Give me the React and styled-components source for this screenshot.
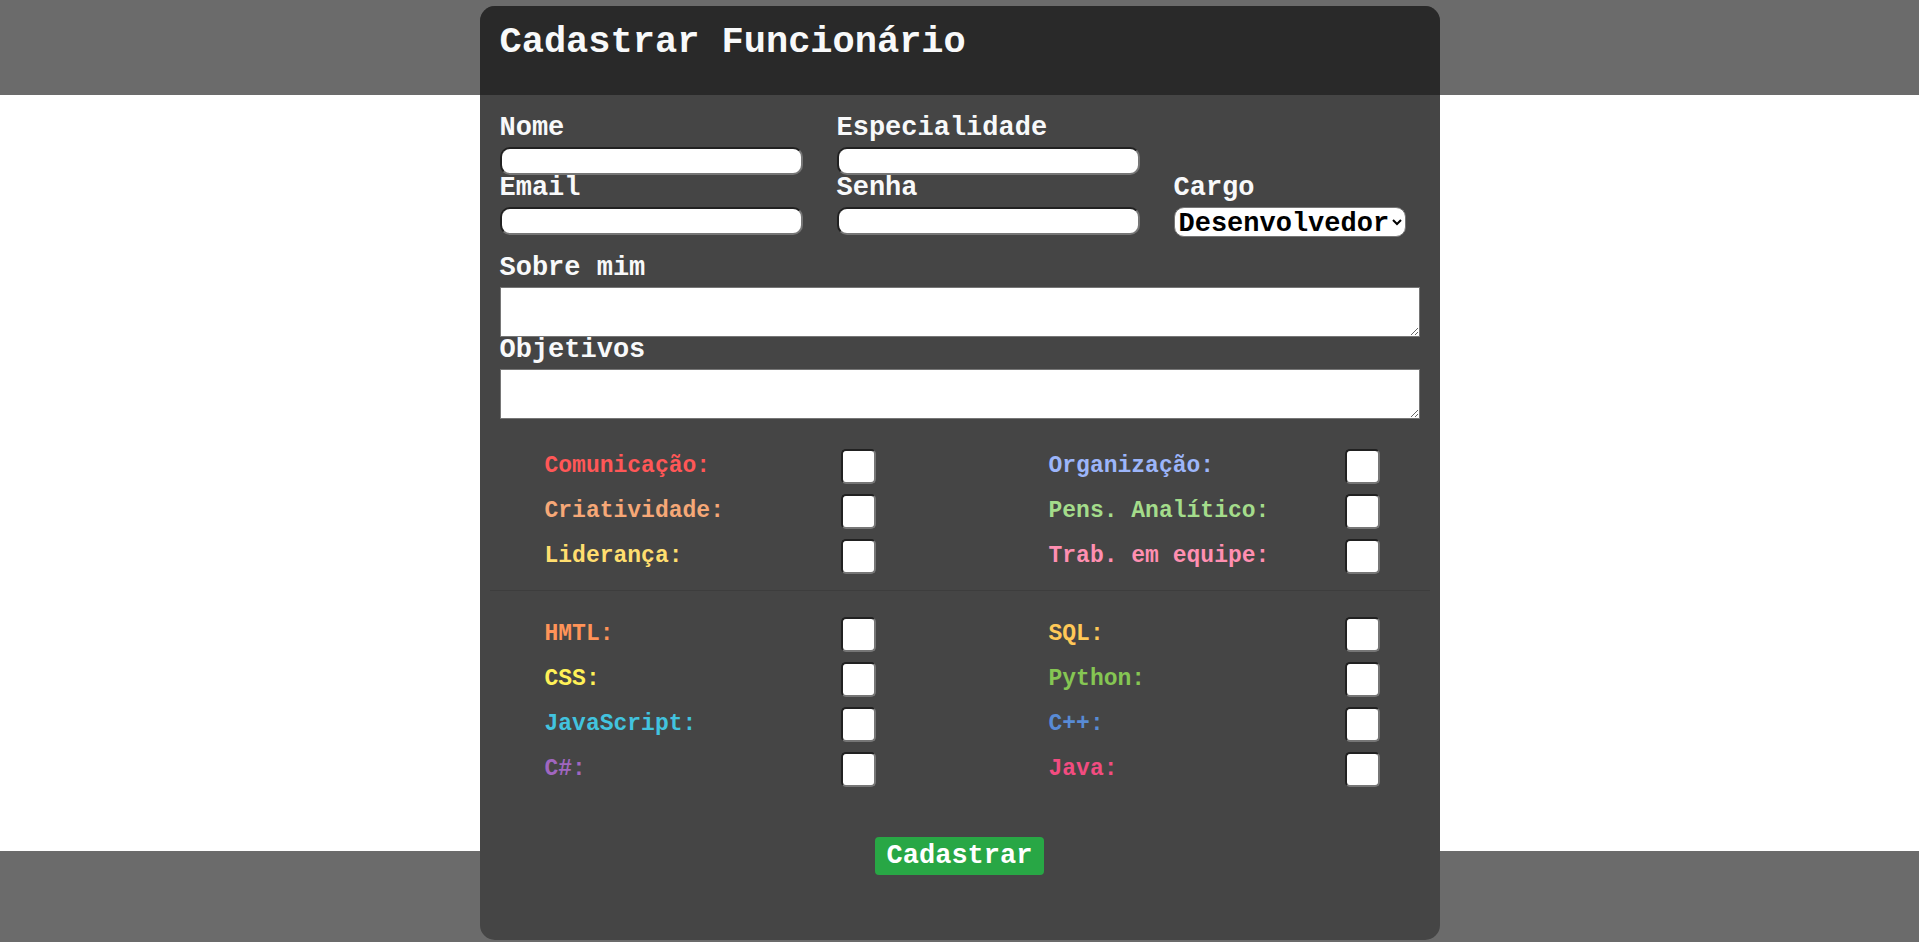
import React from "react";
import styled, { createGlobalStyle } from "styled-components";

const GlobalStyle = createGlobalStyle`
  *, *::before, *::after { box-sizing: border-box; }
  body {
    margin: 0;
    background: #fff;
    font-family: "Liberation Mono", "DejaVu Sans Mono", monospace;
    font-weight: 700;
  }
`;

const Page = styled.div`
  position: relative;
  display: flex;
  flex-direction: column;
  min-height: 100vh;
`;

const TopBand = styled.div`
  height: 95px;
  background: #6b6b6b;
`;

const Backdrop = styled.div`
  flex: 1;
`;

const BottomBand = styled.div`
  height: 91px;
  background: #6b6b6b;
`;

const Overlay = styled.div`
  position: absolute;
  inset: 0;
  display: flex;
  justify-content: center;
  align-items: flex-start;
  padding: 6px 0 2px;
`;

const Dialog = styled.section`
  width: 100%;
  max-width: 960px;
  overflow: hidden;
  border-radius: 15px;
  background: #454545;
`;

const DialogHeader = styled.header`
  min-height: 89px;
  padding: 20px;
  background: #292929;
`;

const Title = styled.h1`
  margin: 0;
  color: #f8f9fa;
  font-size: 37px;
  line-height: 32px;
`;

const Form = styled.form`
  padding: 20px 10px 65px;
`;

const FieldGrid = styled.div`
  display: grid;
  grid-template-columns: 303fr 303fr 246fr;
  column-gap: 34px;
  align-items: start;
  padding: 0 10px;
`;

const Field = styled.div`
  grid-column: ${(p) => p.$column || "auto"};
  display: flex;
  flex-direction: column;
  align-items: stretch;
`;

const TextFields = styled.div`
  padding: 18px 10px 0;
`;

const FieldLabel = styled.label`
  margin-bottom: 6px;
  color: #f8f9fa;
  font-size: 27px;
  line-height: 26px;
`;

const TextInput = styled.input`
  width: 100%;
  height: 28px;
  padding: 1px 6px;
  border: 2px inset #767676;
  border-radius: 10px;
  background: #fff;
  font: inherit;
  font-size: 16px;
`;

const Select = styled.select`
  align-self: flex-start;
  width: 232px;
  height: 30px;
  padding: 0 0 3px;
  border: 1px solid #767676;
  border-radius: 10px;
  background: #fff;
  color: #000;
  font: inherit;
  font-size: 27px;
  line-height: 28px;
`;

const TextArea = styled.textarea`
  display: block;
  width: 100%;
  height: 50px;
  margin: 0;
  padding: 2px;
  border: 1px solid #767676;
  border-radius: 0;
  background: #fff;
  font: inherit;
  font-size: 16px;
  resize: both;
`;

const SkillGrid = styled.div`
  display: grid;
  grid-template-columns: 1fr 1fr;
  gap: 10px 173px;
  padding: ${(p) => p.$top}px 50px 0 55px;
`;

const SkillRow = styled.div`
  display: flex;
  justify-content: space-between;
  align-items: flex-start;
`;

const SkillLabel = styled.label`
  color: ${(p) => p.$color};
  font-size: 23px;
  line-height: 34px;
  white-space: nowrap;
`;

const SkillInput = styled.input`
  width: 35px;
  height: 35px;
  padding: 1px 2px;
  border: 2px inset #767676;
  border-radius: 5px;
  background: #fff;
  font: inherit;
  font-size: 16px;
  text-align: center;
`;

const Divider = styled.hr`
  height: 1px;
  margin: 16px 0 0;
  border: 0;
  background: #3d3d3d;
`;

const Actions = styled.div`
  display: flex;
  justify-content: center;
  padding-top: 50px;
`;

const SubmitButton = styled.button`
  height: 38px;
  padding: 0 12px;
  border: 0;
  border-radius: 4px;
  background: #28a745;
  color: #fff;
  font: inherit;
  font-size: 27px;
  line-height: 38px;
  cursor: pointer;
`;

const softSkills = [
  { id: "comunicacao", label: "Comunicação:", color: "#ff5757" },
  { id: "organizacao", label: "Organização:", color: "#9cb5fa" },
  { id: "criatividade", label: "Criatividade:", color: "#f6a877" },
  { id: "analitico", label: "Pens. Analítico:", color: "#a4dc8b" },
  { id: "lideranca", label: "Liderança:", color: "#ffde6f" },
  { id: "equipe", label: "Trab. em equipe:", color: "#ff8fb1" },
];

const hardSkills = [
  { id: "html", label: "HMTL:", color: "#ff9358" },
  { id: "sql", label: "SQL:", color: "#ffc857" },
  { id: "css", label: "CSS:", color: "#fff157" },
  { id: "python", label: "Python:", color: "#85c653" },
  { id: "javascript", label: "JavaScript:", color: "#42c3df" },
  { id: "cpp", label: "C++:", color: "#588bd5" },
  { id: "csharp", label: "C#:", color: "#a066c0" },
  { id: "java", label: "Java:", color: "#f24c80" },
];

function InputField({ id, label, type = "text", column }) {
  return (
    <Field $column={column}>
      <FieldLabel htmlFor={id}>{label}</FieldLabel>
      <TextInput id={id} name={id} type={type} />
    </Field>
  );
}

function AreaField({ id, label }) {
  return (
    <Field>
      <FieldLabel htmlFor={id}>{label}</FieldLabel>
      <TextArea id={id} name={id} />
    </Field>
  );
}

function Skills({ items, top }) {
  return (
    <SkillGrid $top={top}>
      {items.map((s) => (
        <SkillRow key={s.id}>
          <SkillLabel htmlFor={s.id} $color={s.color}>
            {s.label}
          </SkillLabel>
          <SkillInput id={s.id} name={s.id} type="text" inputMode="numeric" />
        </SkillRow>
      ))}
    </SkillGrid>
  );
}

export default function App() {
  return (
    <>
      <GlobalStyle />
      <Page>
        <TopBand />
        <Backdrop />
        <BottomBand />
        <Overlay>
          <Dialog role="dialog" aria-labelledby="titulo">
            <DialogHeader>
              <Title id="titulo">Cadastrar Funcionário</Title>
            </DialogHeader>
            <Form onSubmit={(e) => e.preventDefault()}>
              <FieldGrid>
                <InputField id="nome" label="Nome" column="1" />
                <InputField id="especialidade" label="Especialidade" column="2" />
                <InputField id="email" label="Email" type="email" column="1" />
                <InputField id="senha" label="Senha" type="password" column="2" />
                <Field $column="3">
                  <FieldLabel htmlFor="cargo">Cargo</FieldLabel>
                  <Select id="cargo" name="cargo" defaultValue="dev">
                    <option value="dev">Desenvolvedor</option>
                  </Select>
                </Field>
              </FieldGrid>
              <TextFields>
                <AreaField id="sobre" label="Sobre mim" />
                <AreaField id="objetivos" label="Objetivos" />
              </TextFields>
              <Skills items={softSkills} top={30} />
              <Divider />
              <Skills items={hardSkills} top={26} />
              <Actions>
                <SubmitButton type="submit">Cadastrar</SubmitButton>
              </Actions>
            </Form>
          </Dialog>
        </Overlay>
      </Page>
    </>
  );
}
